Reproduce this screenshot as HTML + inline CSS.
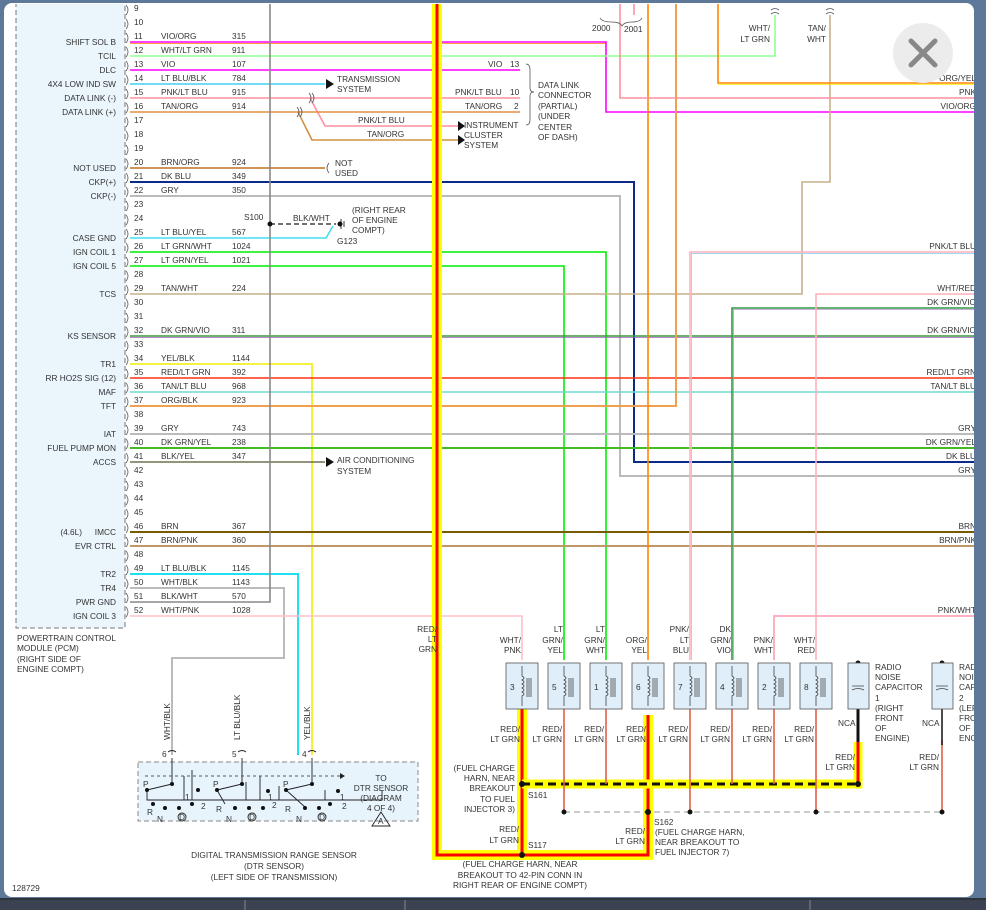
<!DOCTYPE html>
<html><head><meta charset="utf-8"><style>
html,body{margin:0;padding:0;background:#5d7898;width:986px;height:910px;overflow:hidden}
svg{display:block}
text{font-family:"Liberation Sans",sans-serif;font-size:8.3px;fill:#333}
.r{text-anchor:end}.m{text-anchor:middle}
</style></head><body>
<svg width="986" height="910" viewBox="0 0 986 910">
<defs><clipPath id="pc"><rect x="4" y="4" width="970" height="893" rx="8"/></clipPath></defs>
<rect x="0" y="0" width="986" height="910" fill="#5d7898"/>
<rect x="4" y="3" width="970" height="894" rx="8" fill="#fff"/>
<rect x="0" y="898" width="986" height="12" fill="#3b4251"/>
<line x1="0" y1="899" x2="986" y2="899" stroke="#222" stroke-width="1"/>
<line x1="245" y1="900" x2="245" y2="910" stroke="#888"/><line x1="405" y1="900" x2="405" y2="910" stroke="#888"/><line x1="810" y1="900" x2="810" y2="910" stroke="#888"/>
<g clip-path="url(#pc)">
<!-- PCM box -->
<rect x="16" y="-5" width="109" height="633" fill="#eaf5fc" stroke="#777" stroke-dasharray="5,3"/>
<g stroke-width="1.6" fill="none">
<!-- wires -->
<path d="M130,42 H606 V112 H974" stroke="#ff00ff"/><path d="M130,43.5 H605" stroke="#ffa040" stroke-width="1"/>
<path d="M130,56 H775 V15" stroke="#90ff90"/>
<path d="M130,70 H520" stroke="#ff00ff"/>
<path d="M130,84 H325" stroke="#40d0f0"/>
<path d="M130,98 H520" stroke="#ff90a0"/><path d="M310,98 L325,126 H458" stroke="#ff90a0"/>
<path d="M130,112 H520" stroke="#e09040"/><path d="M298,112 L312,140 H458" stroke="#d09040"/>
<path d="M130,168 H325" stroke="#c07020"/>
<path d="M130,182 H634 V462 H974" stroke="#0a2a8a" stroke-width="2"/>
<path d="M130,196 H620 V476 H974" stroke="#bbb" stroke-width="2"/>
<path d="M130,238 H326 L333,226" stroke="#40e0f0"/>
<path d="M130,252 H606 V660" stroke="#00ee00"/>
<path d="M130,266 H564 V660" stroke="#00ee00"/>
<path d="M130,294 H802 V182 H830 V15" stroke="#c8b08a"/>
<path d="M130,336 H974" stroke="#3a9a3a"/><path d="M130,337.5 H974" stroke="#a060c0" stroke-width="0.8"/>
<path d="M130,364 H312 V755" stroke="#eeee00"/>
<path d="M130,378 H974" stroke="#ff3010"/>
<path d="M130,392 H974" stroke="#70d8d0"/>
<path d="M130,406 H676 V0" stroke="#f0a050" stroke-width="2"/>
<path d="M130,434 H974" stroke="#bbb" stroke-width="2"/>
<path d="M130,448 H974" stroke="#44bb22" stroke-width="2"/>
<path d="M130,462 H325" stroke="#707050"/>
<path d="M130,532 H974" stroke="#7a5a00" stroke-width="2"/>
<path d="M130,546 H974" stroke="#c09868" stroke-width="2"/>
<path d="M130,574 H298 V755" stroke="#20e0f0" stroke-width="2"/>
<path d="M130,588 H284 V658 H172 V755" stroke="#bbb" stroke-width="2"/>
<path d="M130,602 H270 V0" stroke="#888"/>
<path d="M130,616 H522 V660" stroke="#ffc0c8"/>
<path d="M648,0 V660" stroke="#ff8800"/>
<path d="M620,0 V98 H974" stroke="#ff90a0"/><path d="M634,0 V15" stroke="#ff90a0"/>
<path d="M718,0 V83 H974" stroke="#ff8800"/><path d="M718,84.5 H974" stroke="#ffee00" stroke-width="0.8"/>
<path d="M690,660 V252 H974" stroke="#ffb0c0"/><path d="M691.5,660 V253.5 H974" stroke="#a0d8f0" stroke-width="1"/>
<path d="M732,660 V308 H974" stroke="#339944"/><path d="M733.5,660 V309.5 H974" stroke="#c090d0" stroke-width="0.8"/>
<path d="M816,660 V294 H974" stroke="#ffb0b8"/>
<path d="M774,660 V616 H974" stroke="#ffb0c0" stroke-width="2"/>
<!-- brace 2000/2001 -->
<path d="M600,18 q2,4 12,4 q8,0 10,4 q2,-4 10,-4 q8,0 10,-4" stroke="#555" stroke-width="0.8"/>
<!-- data link brace -->
<path d="M526,64 q4,0 4,6 v18 q0,4 4,4 q-4,0 -4,4 v24 q0,5 -4,5" stroke="#555" stroke-width="0.8"/>
<!-- ground dashed -->
<path d="M270,224 H336" stroke="#444" stroke-dasharray="5,3" stroke-width="1.5"/>
<path d="M341,219 V229 M344,221 V227" stroke="#333" stroke-width="1"/>
<!-- not used bracket -->
<path d="M329,163 q-4,5 0,10" stroke="#555" stroke-width="0.8"/>
</g>
<circle cx="270" cy="224" r="2.5" fill="#111"/><circle cx="340" cy="224" r="2.5" fill="#111"/>
<!-- arrows -->
<path d="M326,79 L334,84 L326,89Z M458,121 L465,126 L458,131Z M458,135 L465,140 L458,145Z M326,457 L334,462 L326,467Z" fill="#111"/>
<!-- connector glyphs -->
<g stroke="#555" fill="none" stroke-width="0.8">
<path d="M126,5 q4,5 0,10 M126,19 q4,5 0,10 M126,33 q4,5 0,10 M126,47 q4,5 0,10 M126,61 q4,5 0,10 M126,75 q4,5 0,10 M126,89 q4,5 0,10 M126,103 q4,5 0,10 M126,117 q4,5 0,10 M126,131 q4,5 0,10 M126,145 q4,5 0,10 M126,159 q4,5 0,10 M126,173 q4,5 0,10 M126,187 q4,5 0,10 M126,201 q4,5 0,10 M126,215 q4,5 0,10 M126,229 q4,5 0,10 M126,243 q4,5 0,10 M126,257 q4,5 0,10 M126,271 q4,5 0,10 M126,285 q4,5 0,10 M126,299 q4,5 0,10 M126,313 q4,5 0,10 M126,327 q4,5 0,10 M126,341 q4,5 0,10 M126,355 q4,5 0,10 M126,369 q4,5 0,10 M126,383 q4,5 0,10 M126,397 q4,5 0,10 M126,411 q4,5 0,10 M126,425 q4,5 0,10 M126,439 q4,5 0,10 M126,453 q4,5 0,10 M126,467 q4,5 0,10 M126,481 q4,5 0,10 M126,495 q4,5 0,10 M126,509 q4,5 0,10 M126,523 q4,5 0,10 M126,537 q4,5 0,10 M126,551 q4,5 0,10 M126,565 q4,5 0,10 M126,579 q4,5 0,10 M126,593 q4,5 0,10 M126,607 q4,5 0,10"/>
<path d="M309,93 q4,5 0,10 M312,93 q4,5 0,10 M297,107 q4,5 0,10 M300,107 q4,5 0,10"/>
<path d="M771,10 q4,-3 8,0 M771,14 q4,-3 8,0 M826,10 q4,-3 8,0 M826,14 q4,-3 8,0"/>
</g>
<!-- pin numbers -->
<g>
<text x="134" y="11">9</text><text x="134" y="25">10</text><text x="134" y="39">11</text><text x="134" y="53">12</text><text x="134" y="67">13</text><text x="134" y="81">14</text><text x="134" y="95">15</text><text x="134" y="109">16</text><text x="134" y="123">17</text><text x="134" y="137">18</text><text x="134" y="151">19</text><text x="134" y="165">20</text><text x="134" y="179">21</text><text x="134" y="193">22</text><text x="134" y="207">23</text><text x="134" y="221">24</text><text x="134" y="235">25</text><text x="134" y="249">26</text><text x="134" y="263">27</text><text x="134" y="277">28</text><text x="134" y="291">29</text><text x="134" y="305">30</text><text x="134" y="319">31</text><text x="134" y="333">32</text><text x="134" y="347">33</text><text x="134" y="361">34</text><text x="134" y="375">35</text><text x="134" y="389">36</text><text x="134" y="403">37</text><text x="134" y="417">38</text><text x="134" y="431">39</text><text x="134" y="445">40</text><text x="134" y="459">41</text><text x="134" y="473">42</text><text x="134" y="487">43</text><text x="134" y="501">44</text><text x="134" y="515">45</text><text x="134" y="529">46</text><text x="134" y="543">47</text><text x="134" y="557">48</text><text x="134" y="571">49</text><text x="134" y="585">50</text><text x="134" y="599">51</text><text x="134" y="613">52</text>
</g>
<!-- left labels -->
<g class="r">
<text class="r" x="116" y="45">SHIFT SOL B</text><text class="r" x="116" y="59">TCIL</text><text class="r" x="116" y="73">DLC</text><text class="r" x="116" y="87">4X4 LOW IND SW</text><text class="r" x="116" y="101">DATA LINK (-)</text><text class="r" x="116" y="115">DATA LINK (+)</text><text class="r" x="116" y="171">NOT USED</text><text class="r" x="116" y="185">CKP(+)</text><text class="r" x="116" y="199">CKP(-)</text><text class="r" x="116" y="241">CASE GND</text><text class="r" x="116" y="255">IGN COIL 1</text><text class="r" x="116" y="269">IGN COIL 5</text><text class="r" x="116" y="297">TCS</text><text class="r" x="116" y="339">KS SENSOR</text><text class="r" x="116" y="367">TR1</text><text class="r" x="116" y="381">RR HO2S SIG (12)</text><text class="r" x="116" y="395">MAF</text><text class="r" x="116" y="409">TFT</text><text class="r" x="116" y="437">IAT</text><text class="r" x="116" y="451">FUEL PUMP MON</text><text class="r" x="116" y="465">ACCS</text><text class="r" x="116" y="535">IMCC</text><text class="r" x="82" y="535">(4.6L)</text><text class="r" x="116" y="549">EVR CTRL</text><text class="r" x="116" y="577">TR2</text><text class="r" x="116" y="591">TR4</text><text class="r" x="116" y="605">PWR GND</text><text class="r" x="116" y="619">IGN COIL 3</text>
</g>
<!-- wire labels -->
<text x="161" y="39">VIO/ORG</text><text x="232" y="39">315</text>
<text x="161" y="53">WHT/LT GRN</text><text x="232" y="53">911</text>
<text x="161" y="67">VIO</text><text x="232" y="67">107</text>
<text x="161" y="81">LT BLU/BLK</text><text x="232" y="81">784</text>
<text x="161" y="95">PNK/LT BLU</text><text x="232" y="95">915</text>
<text x="161" y="109">TAN/ORG</text><text x="232" y="109">914</text>
<text x="161" y="165">BRN/ORG</text><text x="232" y="165">924</text>
<text x="161" y="179">DK BLU</text><text x="232" y="179">349</text>
<text x="161" y="193">GRY</text><text x="232" y="193">350</text>
<text x="161" y="235">LT BLU/YEL</text><text x="232" y="235">567</text>
<text x="161" y="249">LT GRN/WHT</text><text x="232" y="249">1024</text>
<text x="161" y="263">LT GRN/YEL</text><text x="232" y="263">1021</text>
<text x="161" y="291">TAN/WHT</text><text x="232" y="291">224</text>
<text x="161" y="333">DK GRN/VIO</text><text x="232" y="333">311</text>
<text x="161" y="361">YEL/BLK</text><text x="232" y="361">1144</text>
<text x="161" y="375">RED/LT GRN</text><text x="232" y="375">392</text>
<text x="161" y="389">TAN/LT BLU</text><text x="232" y="389">968</text>
<text x="161" y="403">ORG/BLK</text><text x="232" y="403">923</text>
<text x="161" y="431">GRY</text><text x="232" y="431">743</text>
<text x="161" y="445">DK GRN/YEL</text><text x="232" y="445">238</text>
<text x="161" y="459">BLK/YEL</text><text x="232" y="459">347</text>
<text x="161" y="529">BRN</text><text x="232" y="529">367</text>
<text x="161" y="543">BRN/PNK</text><text x="232" y="543">360</text>
<text x="161" y="571">LT BLU/BLK</text><text x="232" y="571">1145</text>
<text x="161" y="585">WHT/BLK</text><text x="232" y="585">1143</text>
<text x="161" y="599">BLK/WHT</text><text x="232" y="599">570</text>
<text x="161" y="613">WHT/PNK</text><text x="232" y="613">1028</text>
<!-- misc labels -->
<text x="337" y="82">TRANSMISSION</text><text x="337" y="92">SYSTEM</text>
<text x="464" y="128">INSTRUMENT</text><text x="464" y="138">CLUSTER</text><text x="464" y="148">SYSTEM</text>
<text x="358" y="123">PNK/LT BLU</text><text x="367" y="137">TAN/ORG</text>
<text x="488" y="67">VIO</text><text x="510" y="67">13</text>
<text x="455" y="95">PNK/LT BLU</text><text x="510" y="95">10</text>
<text x="465" y="109">TAN/ORG</text><text x="514" y="109">2</text>
<text x="538" y="88">DATA LINK</text><text x="538" y="98">CONNECTOR</text><text x="538" y="109">(PARTIAL)</text><text x="538" y="119">(UNDER</text><text x="538" y="130">CENTER</text><text x="538" y="140">OF DASH)</text>
<text x="592" y="31">2000</text><text x="624" y="32">2001</text>
<text class="r" x="770" y="31">WHT/</text><text class="r" x="770" y="42">LT GRN</text>
<text class="r" x="826" y="31">TAN/</text><text class="r" x="826" y="42">WHT</text>
<text x="335" y="166">NOT</text><text x="335" y="176">USED</text>
<text x="244" y="220">S100</text><text x="293" y="221">BLK/WHT</text>
<text x="352" y="213">(RIGHT REAR</text><text x="352" y="223">OF ENGINE</text><text x="352" y="233">COMPT)</text><text x="337" y="244">G123</text>
<text x="337" y="463">AIR CONDITIONING</text><text x="337" y="474">SYSTEM</text>
<text x="17" y="641">POWERTRAIN CONTROL</text><text x="17" y="651">MODULE (PCM)</text><text x="17" y="662">(RIGHT SIDE OF</text><text x="17" y="672">ENGINE COMPT)</text>
<text x="12" y="891">128729</text>
<!-- right edge labels -->
<g>
<text class="r" x="976" y="81">ORG/YEL</text><text class="r" x="976" y="95">PNK</text><text class="r" x="976" y="109">VIO/ORG</text><text class="r" x="976" y="249">PNK/LT BLU</text><text class="r" x="976" y="291">WHT/RED</text><text class="r" x="976" y="305">DK GRN/VIO</text><text class="r" x="976" y="333">DK GRN/VIO</text><text class="r" x="976" y="375">RED/LT GRN</text><text class="r" x="976" y="389">TAN/LT BLU</text><text class="r" x="976" y="431">GRY</text><text class="r" x="976" y="445">DK GRN/YEL</text><text class="r" x="976" y="459">DK BLU</text><text class="r" x="976" y="473">GRY</text><text class="r" x="976" y="529">BRN</text><text class="r" x="976" y="543">BRN/PNK</text><text class="r" x="976" y="613">PNK/WHT</text>
</g>
<!-- fuel harness -->
<g fill="none">
<path d="M437,-5 V855 H648 V715 M522,685 V855" stroke="#ffff00" stroke-width="10"/>
<path d="M437,-5 V855 H648 V715 M522,685 V855" stroke="#ff0000" stroke-width="3"/>
<path d="M522,784 H858 V742" stroke="#ffff00" stroke-width="9"/>
<path d="M858,742 V784" stroke="#ff0000" stroke-width="3"/>
<path d="M522,784 H858" stroke="#111" stroke-width="3" stroke-dasharray="8,5"/>
<path d="M858,675 V742" stroke="#111" stroke-width="3"/>
<g stroke="#e06048" stroke-width="1.6">
<path d="M564,709 V812 M606,709 V784 M690,709 V812 M732,709 V784 M774,709 V784 M816,709 V812 M942,740 V812"/>
</g>
<path d="M564,812 H942" stroke="#777" stroke-dasharray="6,4" stroke-width="0.8"/>
<path d="M942,672 V745" stroke="#111" stroke-width="1.5"/>
</g>
<g fill="#111"><circle cx="564" cy="812" r="2.5"/><circle cx="690" cy="812" r="2.5"/><circle cx="816" cy="812" r="2.5"/><circle cx="942" cy="812" r="2.5"/><circle cx="522" cy="784" r="3"/><circle cx="858" cy="784" r="3"/><circle cx="648" cy="812" r="3"/><circle cx="522" cy="855" r="3"/><circle cx="858" cy="663" r="2.5"/><circle cx="942" cy="663" r="2.5"/></g>
<!-- injectors -->
<g stroke="#555" stroke-width="0.8">
<rect x="506" y="663" width="32" height="46" fill="#dfeef8"/><rect x="548" y="663" width="32" height="46" fill="#dfeef8"/><rect x="590" y="663" width="32" height="46" fill="#dfeef8"/><rect x="632" y="663" width="32" height="46" fill="#dfeef8"/><rect x="674" y="663" width="32" height="46" fill="#dfeef8"/><rect x="716" y="663" width="32" height="46" fill="#dfeef8"/><rect x="758" y="663" width="32" height="46" fill="#dfeef8"/><rect x="800" y="663" width="32" height="46" fill="#dfeef8"/>
<rect x="848" y="663" width="21" height="46" fill="#dfeef8"/><rect x="932" y="663" width="21" height="46" fill="#dfeef8"/>
</g>
<g fill="none" stroke="#444" stroke-width="0.8">
<path id="coil" d="M522,666 V676 q4,2 0,4 q4,2 0,4 q4,2 0,4 q4,2 0,4 q4,2 0,4 V706 M527,678 V697 M529,678 V697 M531,678 V697"/>
<path d="M564,666 V676 q4,2 0,4 q4,2 0,4 q4,2 0,4 q4,2 0,4 q4,2 0,4 V706 M569,678 V697 M571,678 V697 M573,678 V697"/>
<path d="M606,666 V676 q4,2 0,4 q4,2 0,4 q4,2 0,4 q4,2 0,4 q4,2 0,4 V706 M611,678 V697 M613,678 V697 M615,678 V697"/>
<path d="M648,666 V676 q4,2 0,4 q4,2 0,4 q4,2 0,4 q4,2 0,4 q4,2 0,4 V706 M653,678 V697 M655,678 V697 M657,678 V697"/>
<path d="M690,666 V676 q4,2 0,4 q4,2 0,4 q4,2 0,4 q4,2 0,4 q4,2 0,4 V706 M695,678 V697 M697,678 V697 M699,678 V697"/>
<path d="M732,666 V676 q4,2 0,4 q4,2 0,4 q4,2 0,4 q4,2 0,4 q4,2 0,4 V706 M737,678 V697 M739,678 V697 M741,678 V697"/>
<path d="M774,666 V676 q4,2 0,4 q4,2 0,4 q4,2 0,4 q4,2 0,4 q4,2 0,4 V706 M779,678 V697 M781,678 V697 M783,678 V697"/>
<path d="M816,666 V676 q4,2 0,4 q4,2 0,4 q4,2 0,4 q4,2 0,4 q4,2 0,4 V706 M821,678 V697 M823,678 V697 M825,678 V697"/>
<path d="M852,686 H864 M852,690 q6,-3 12,0 M936,686 H948 M936,690 q6,-3 12,0"/>
</g>
<text x="510" y="690">3</text><text x="552" y="690">5</text><text x="594" y="690">1</text><text x="636" y="690">6</text><text x="678" y="690">7</text><text x="720" y="690">4</text><text x="762" y="690">2</text><text x="804" y="690">8</text>
<!-- labels above injectors -->
<text class="r" x="521" y="643">WHT/</text><text class="r" x="521" y="653">PNK</text>
<text class="r" x="563" y="632">LT</text><text class="r" x="563" y="643">GRN/</text><text class="r" x="563" y="653">YEL</text>
<text class="r" x="605" y="632">LT</text><text class="r" x="605" y="643">GRN/</text><text class="r" x="605" y="653">WHT</text>
<text class="r" x="647" y="643">ORG/</text><text class="r" x="647" y="653">YEL</text>
<text class="r" x="689" y="632">PNK/</text><text class="r" x="689" y="643">LT</text><text class="r" x="689" y="653">BLU</text>
<text class="r" x="731" y="632">DK</text><text class="r" x="731" y="643">GRN/</text><text class="r" x="731" y="653">VIO</text>
<text class="r" x="773" y="643">PNK/</text><text class="r" x="773" y="653">WHT</text>
<text class="r" x="815" y="643">WHT/</text><text class="r" x="815" y="653">RED</text>
<text class="r" x="437" y="632">RED/</text><text class="r" x="437" y="642">LT</text><text class="r" x="437" y="652">GRN</text>
<!-- labels below -->
<text class="r" x="520" y="732">RED/</text><text class="r" x="520" y="742">LT GRN</text>
<text class="r" x="562" y="732">RED/</text><text class="r" x="562" y="742">LT GRN</text>
<text class="r" x="604" y="732">RED/</text><text class="r" x="604" y="742">LT GRN</text>
<text class="r" x="646" y="732">RED/</text><text class="r" x="646" y="742">LT GRN</text>
<text class="r" x="688" y="732">RED/</text><text class="r" x="688" y="742">LT GRN</text>
<text class="r" x="730" y="732">RED/</text><text class="r" x="730" y="742">LT GRN</text>
<text class="r" x="772" y="732">RED/</text><text class="r" x="772" y="742">LT GRN</text>
<text class="r" x="814" y="732">RED/</text><text class="r" x="814" y="742">LT GRN</text>
<text class="r" x="855" y="760">RED/</text><text class="r" x="855" y="770">LT GRN</text>
<text class="r" x="939" y="760">RED/</text><text class="r" x="939" y="770">LT GRN</text>
<text x="838" y="726">NCA</text><text x="922" y="726">NCA</text>
<text x="875" y="670">RADIO</text><text x="875" y="680">NOISE</text><text x="875" y="690">CAPACITOR</text><text x="875" y="701">1</text><text x="875" y="711">(RIGHT</text><text x="875" y="721">FRONT</text><text x="875" y="731">OF</text><text x="875" y="741">ENGINE)</text>
<text x="959" y="670">RADIO</text><text x="959" y="680">NOISE</text><text x="959" y="690">CAPACITOR</text><text x="959" y="701">2</text><text x="959" y="711">(LEFT</text><text x="959" y="721">FRONT</text><text x="959" y="731">OF</text><text x="959" y="741">ENGINE)</text>
<text class="r" x="515" y="771">(FUEL CHARGE</text><text class="r" x="515" y="781">HARN, NEAR</text><text class="r" x="515" y="791">BREAKOUT</text><text class="r" x="515" y="802">TO FUEL</text><text class="r" x="515" y="812">INJECTOR 3)</text>
<text x="528" y="798">S161</text>
<text class="r" x="519" y="832">RED/</text><text class="r" x="519" y="843">LT GRN</text><text x="528" y="848">S117</text>
<text class="m" x="520" y="867">(FUEL CHARGE HARN, NEAR</text><text class="m" x="520" y="878">BREAKOUT TO 42-PIN CONN IN</text><text class="m" x="520" y="888">RIGHT REAR OF ENGINE COMPT)</text>
<text x="654" y="825">S162</text>
<text class="r" x="645" y="834">RED/</text><text class="r" x="645" y="844">LT GRN</text>
<text x="655" y="835">(FUEL CHARGE HARN,</text><text x="655" y="845">NEAR BREAKOUT TO</text><text x="655" y="855">FUEL INJECTOR 7)</text>
<!-- DTR sensor -->
<rect x="138" y="762" width="280" height="59" fill="#e8f4fc" stroke="#888" stroke-dasharray="5,3"/>
<g fill="none" stroke="#222" stroke-width="0.9">
<path d="M147,790 V800 H382 V790 M184,776 V800 M192,770 V800 M246,782 V800 M260,776 V800 M279,786 V800 M325,790 V800 M172,758 V784 M242,758 V784 M312,758 V784"/>
<path d="M147,790 L172,784 M217,790 L242,784 M286,790 L312,784 M217,790 L225,804 M286,790 L305,807"/>
<path d="M145,776 H340" stroke-dasharray="3,3" stroke="#555"/>
<path d="M168,752 q4,-3 8,0 M238,752 q4,-3 8,0 M308,752 q4,-3 8,0"/>
<path d="M372,826 L381,812 L390,826Z"/>
<circle cx="182" cy="817" r="4"/><circle cx="252" cy="817" r="4"/><circle cx="322" cy="817" r="4"/>
</g>
<path d="M340,773 L345,776 L340,779Z" fill="#222"/>
<g fill="#111"><circle cx="147" cy="790" r="2"/><circle cx="172" cy="784" r="2"/><circle cx="153" cy="804" r="2"/><circle cx="165" cy="808" r="2"/><circle cx="179" cy="808" r="2"/><circle cx="192" cy="804" r="2"/><circle cx="198" cy="790" r="2"/><circle cx="217" cy="790" r="2"/><circle cx="242" cy="784" r="2"/><circle cx="235" cy="808" r="2"/><circle cx="249" cy="808" r="2"/><circle cx="263" cy="808" r="2"/><circle cx="268" cy="791" r="2"/><circle cx="286" cy="790" r="2"/><circle cx="312" cy="784" r="2"/><circle cx="305" cy="808" r="2"/><circle cx="319" cy="808" r="2"/><circle cx="330" cy="804" r="2"/><circle cx="338" cy="791" r="2"/></g>
<g style="font-size:7.5px"><text x="143" y="787">P</text><text x="213" y="787">P</text><text x="283" y="787">P</text><text x="147" y="815">R</text><text x="157" y="822">N</text><text x="216" y="812">R</text><text x="226" y="822">N</text><text x="285" y="812">R</text><text x="296" y="822">N</text><text x="185" y="800">1</text><text x="201" y="809">2</text><text x="272" y="808">2</text><text x="268" y="800">1</text><text x="342" y="809">2</text><text x="340" y="800">1</text><text x="179" y="820">D</text><text x="249" y="820">D</text><text x="319" y="820">D</text><text x="378" y="824">A</text></g>
<text x="162" y="757">6</text><text x="232" y="757">5</text><text x="302" y="757">4</text>
<text class="m" x="381" y="781">TO</text><text class="m" x="381" y="791">DTR SENSOR</text><text class="m" x="381" y="801">(DIAGRAM</text><text class="m" x="381" y="811">4 OF 4)</text>
<text transform="translate(170,740) rotate(-90)">WHT/BLK</text>
<text transform="translate(240,740) rotate(-90)">LT BLU/BLK</text>
<text transform="translate(310,740) rotate(-90)">YEL/BLK</text>
<text class="m" x="274" y="858">DIGITAL TRANSMISSION RANGE SENSOR</text><text class="m" x="274" y="869">(DTR SENSOR)</text><text class="m" x="274" y="880">(LEFT SIDE OF TRANSMISSION)</text>
</g>
<!-- close button -->
<circle cx="923" cy="53" r="30" fill="#ececec"/>
<path d="M911,41 L935,65 M935,41 L911,65" stroke="#888" stroke-width="5" stroke-linecap="round"/>
</svg>
</body></html>
